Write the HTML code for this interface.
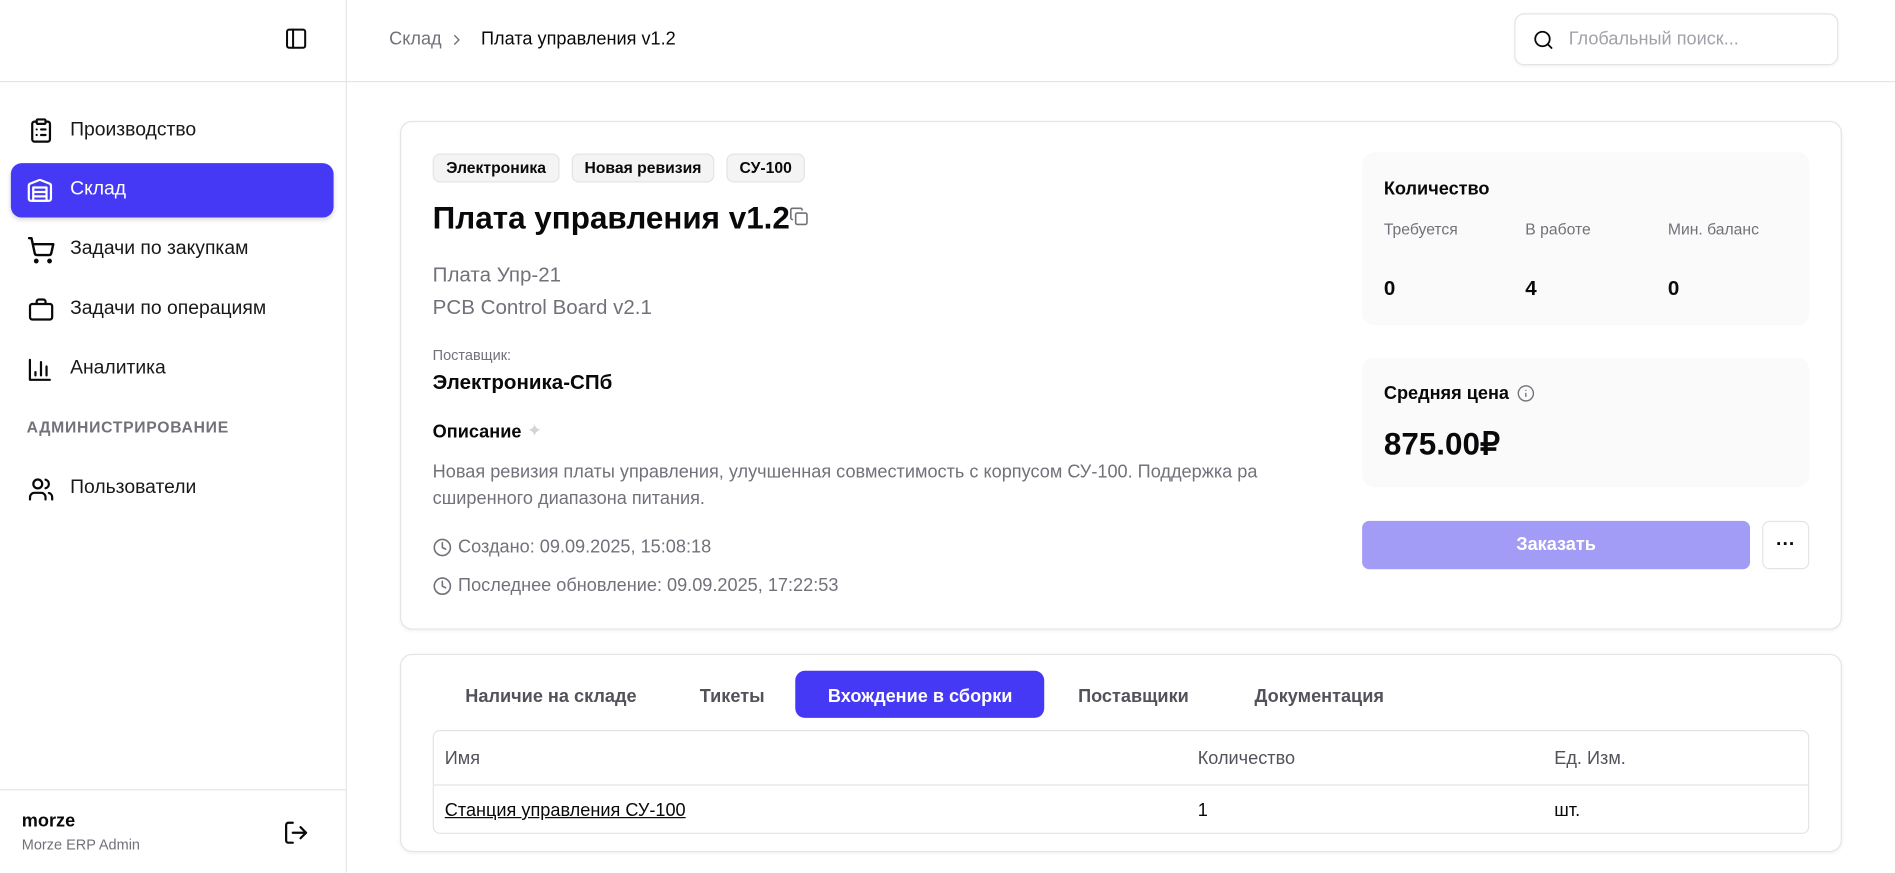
<!DOCTYPE html>
<html><head><meta charset="utf-8"><style>
*{box-sizing:border-box;margin:0;padding:0}
html,body{width:1895px;height:872px;overflow:hidden;background:#fff}
body{font-family:"Liberation Sans","Noto Sans CJK SC",sans-serif;color:#09090b}
#w{position:absolute;left:0;top:0;width:1568px;height:722px;transform:scale(1.2086);transform-origin:0 0}
.a{position:absolute;white-space:nowrap;line-height:1.4}
svg{position:absolute;fill:none;stroke:currentColor;stroke-width:2;stroke-linecap:round;stroke-linejoin:round}
.nav{font-size:16px;color:#18181b}
.tag{position:absolute;top:127px;height:24px;border:1px solid #e4e4e7;background:#f4f4f5;border-radius:6px;font-size:13px;font-weight:bold;line-height:22px;text-align:center}
.g{color:#71717a}
.tab{position:absolute;top:566px;font-size:15px;font-weight:bold;color:#52525b;line-height:1.4}
</style></head><body><div id="w">
<div class="a" style="left:286px;top:0;width:1px;height:722px;background:#e4e4e7"></div>
<div class="a" style="left:0;top:67px;width:1568px;height:1px;background:#e4e4e7"></div>
<div class="a" style="left:0;top:653px;width:286px;height:1px;background:#e4e4e7"></div>
<svg style="left:235px;top:22px" width="20" height="20" viewBox="0 0 24 24"><rect x="3" y="3" width="18" height="18" rx="2"/><path d="M9 3v18"/></svg>

<svg style="left:23px;top:97px" width="22" height="22" viewBox="0 0 24 24"><rect x="8" y="2" width="8" height="4" rx="1"/><path d="M16 4h2a2 2 0 0 1 2 2v14a2 2 0 0 1-2 2H6a2 2 0 0 1-2-2V6a2 2 0 0 1 2-2h2M12 11h4M12 16h4M8 11h.01M8 16h.01"/></svg>
<div class="a nav" style="left:58px;top:97px">Производство</div>
<div class="a" style="left:9px;top:135px;width:267px;height:45px;background:#4639f5;border-radius:9px;box-shadow:0 2px 4px rgba(0,0,0,.15)"></div>
<svg style="left:22px;top:146px;color:#fff" width="22" height="22" viewBox="0 0 24 24"><path d="M22 8.35V20a2 2 0 0 1-2 2H4a2 2 0 0 1-2-2V8.35A2 2 0 0 1 3.26 6.5l8-3.2a2 2 0 0 1 1.48 0l8 3.2A2 2 0 0 1 22 8.35Z"/><path d="M6 18h12M6 14h12M6 10h12v12H6z"/></svg>
<div class="a nav" style="left:58px;top:146px;color:#fff">Склад</div>
<svg style="left:22px;top:195px" width="24" height="24" viewBox="0 0 24 24"><circle cx="8" cy="21" r="1"/><circle cx="19" cy="21" r="1"/><path d="M2.05 2.05h2l2.66 12.42a2 2 0 0 0 2 1.58h9.78a2 2 0 0 0 1.95-1.57l1.65-7.43H5.12"/></svg>
<div class="a nav" style="left:58px;top:195px">Задачи по закупкам</div>
<svg style="left:23px;top:246px" width="22" height="22" viewBox="0 0 24 24"><path d="M16 20V4a2 2 0 0 0-2-2h-4a2 2 0 0 0-2 2v16"/><rect x="2" y="6" width="20" height="14" rx="2" fill="#fff"/></svg>
<div class="a nav" style="left:58px;top:245px">Задачи по операциям</div>
<svg style="left:22px;top:295px" width="22" height="22" viewBox="0 0 24 24"><path d="M3 3v18h18M18 17V9M13 17V5M8 17v-3"/></svg>
<div class="a nav" style="left:58px;top:294px">Аналитика</div>
<div class="a" style="left:22px;top:345px;font-size:13px;font-weight:bold;color:#71717a;letter-spacing:.6px">АДМИНИСТРИРОВАНИЕ</div>
<svg style="left:23px;top:394px" width="22" height="22" viewBox="0 0 24 24"><path d="M16 21v-2a4 4 0 0 0-4-4H6a4 4 0 0 0-4 4v2"/><circle cx="9" cy="7" r="4"/><path d="M22 21v-2a4 4 0 0 0-3-3.87M16 3.13a4 4 0 0 1 0 7.75"/></svg>
<div class="a nav" style="left:58px;top:393px">Пользователи</div>
<div class="a" style="left:18px;top:669px;font-size:15px;font-weight:bold">morze</div>
<div class="a g" style="left:18px;top:691px;font-size:12px">Morze ERP Admin</div>
<svg style="left:234px;top:678px" width="22" height="22" viewBox="0 0 24 24"><path d="M9 21H5a2 2 0 0 1-2-2V5a2 2 0 0 1 2-2h4M16 17l5-5-5-5M21 12H9"/></svg>

<div class="a g" style="left:322px;top:22px;font-size:15px">Склад</div>
<svg style="left:371px;top:26px;color:#71717a" width="14" height="14" viewBox="0 0 24 24"><path d="m9 18 6-6-6-6"/></svg>
<div class="a" style="left:398px;top:22px;font-size:15px">Плата управления v1.2</div>
<div class="a" style="left:1253px;top:11px;width:268px;height:43px;border:1px solid #e4e4e7;border-radius:8px;box-shadow:0 1px 2px rgba(0,0,0,.05)"></div>
<svg style="left:1268px;top:24px" width="18" height="18" viewBox="0 0 24 24"><circle cx="11" cy="11" r="8"/><path d="m21 21-4.3-4.3"/></svg>
<div class="a" style="left:1298px;top:22px;font-size:15px;color:#a1a1aa">Глобальный поиск...</div>

<div class="a" style="left:331px;top:100px;width:1193px;height:421px;border:1px solid #e4e4e7;border-radius:10px;box-shadow:0 1px 3px rgba(0,0,0,.06)"></div>
<div class="tag" style="left:358px;width:105px">Электроника</div>
<div class="tag" style="left:473px;width:118px">Новая ревизия</div>
<div class="tag" style="left:601px;width:65px">СУ-100</div>
<div class="a" style="left:358px;top:162px;font-size:26px;font-weight:bold">Плата управления v1.2</div>
<svg style="left:653px;top:171px;color:#71717a" width="16" height="16" viewBox="0 0 24 24"><rect x="8" y="8" width="14" height="14" rx="2"/><path d="M4 16c-1.1 0-2-.9-2-2V4c0-1.1.9-2 2-2h10c1.1 0 2 .9 2 2"/></svg>
<div class="a g" style="left:358px;top:216px;font-size:17px">Плата Упр-21</div>
<div class="a g" style="left:358px;top:243px;font-size:17px">PCB Control Board v2.1</div>
<div class="a g" style="left:358px;top:286px;font-size:12px">Поставщик:</div>
<div class="a" style="left:358px;top:305px;font-size:17px;font-weight:bold">Электроника-СПб</div>
<div class="a" style="left:358px;top:347px;font-size:15px;font-weight:bold">Описание</div>
<div class="a" style="left:436px;top:346px;font-size:15px;color:#d4d4d8">✦</div>
<div class="a g" style="left:358px;top:380px;font-size:15px;line-height:22px;white-space:normal;width:720px">Новая ревизия платы управления, улучшенная совместимость с корпусом СУ-100. Поддержка ра сширенного диапазона питания.</div>
<svg style="left:358px;top:445px;color:#71717a" width="16" height="16" viewBox="0 0 24 24"><circle cx="12" cy="12" r="10"/><path d="M12 6v6l4 2"/></svg>
<div class="a g" style="left:379px;top:442px;font-size:15px">Создано: 09.09.2025, 15:08:18</div>
<svg style="left:358px;top:477px;color:#71717a" width="16" height="16" viewBox="0 0 24 24"><circle cx="12" cy="12" r="10"/><path d="M12 6v6l4 2"/></svg>
<div class="a g" style="left:379px;top:474px;font-size:15px">Последнее обновление: 09.09.2025, 17:22:53</div>

<div class="a" style="left:1127px;top:126px;width:370px;height:143px;background:#fafafa;border-radius:10px"></div>
<div class="a" style="left:1145px;top:146px;font-size:15px;font-weight:bold">Количество</div>
<div class="a g" style="left:1145px;top:181px;font-size:13px">Требуется</div>
<div class="a g" style="left:1262px;top:181px;font-size:13px">В работе</div>
<div class="a g" style="left:1380px;top:181px;font-size:13px">Мин. баланс</div>
<div class="a" style="left:1145px;top:227px;font-size:17px;font-weight:bold">0</div>
<div class="a" style="left:1262px;top:227px;font-size:17px;font-weight:bold">4</div>
<div class="a" style="left:1380px;top:227px;font-size:17px;font-weight:bold">0</div>
<div class="a" style="left:1127px;top:296px;width:370px;height:107px;background:#fafafa;border-radius:10px"></div>
<div class="a" style="left:1145px;top:315px;font-size:15px;font-weight:bold">Средняя цена</div>
<svg style="left:1255px;top:318px;color:#71717a;stroke-width:1.8" width="15" height="15" viewBox="0 0 24 24"><circle cx="12" cy="12" r="10"/><path d="M12 16v-4M12 8h.01"/></svg>
<div class="a" style="left:1145px;top:349px;font-size:26px;font-weight:bold">875.00₽</div>
<div class="a" style="left:1127px;top:431px;width:321px;height:40px;background:#a39cf7;border-radius:6px;color:#fff;font-size:15px;font-weight:bold;text-align:center;line-height:40px">Заказать</div>
<div class="a" style="left:1458px;top:431px;width:39px;height:40px;border:1px solid #e4e4e7;border-radius:6px;text-align:center;line-height:38px;font-size:16px;font-weight:bold">···</div>

<div class="a" style="left:331px;top:541px;width:1193px;height:164px;border:1px solid #e4e4e7;border-radius:10px;box-shadow:0 1px 3px rgba(0,0,0,.06)"></div>
<div class="tab" style="left:385px">Наличие на складе</div>
<div class="tab" style="left:579px">Тикеты</div>
<div class="a" style="left:658px;top:555px;width:206px;height:39px;background:#4639f5;border-radius:8px"></div>
<div class="tab" style="left:685px;color:#fff">Вхождение в сборки</div>
<div class="tab" style="left:892px">Поставщики</div>
<div class="tab" style="left:1038px">Документация</div>
<div class="a" style="left:358px;top:604px;width:1139px;height:86px;border:1px solid #e4e4e7;border-radius:6px"></div>
<div class="a" style="left:359px;top:649px;width:1137px;height:1px;background:#e4e4e7"></div>
<div class="a" style="left:368px;top:617px;font-size:15px;color:#52525b">Имя</div>
<div class="a" style="left:991px;top:617px;font-size:15px;color:#52525b">Количество</div>
<div class="a" style="left:1286px;top:617px;font-size:15px;color:#52525b">Ед. Изм.</div>
<div class="a" style="left:368px;top:660px;font-size:15px;text-decoration:underline">Станция управления СУ-100</div>
<div class="a" style="left:991px;top:660px;font-size:15px">1</div>
<div class="a" style="left:1286px;top:660px;font-size:15px">шт.</div>
</div></body></html>
